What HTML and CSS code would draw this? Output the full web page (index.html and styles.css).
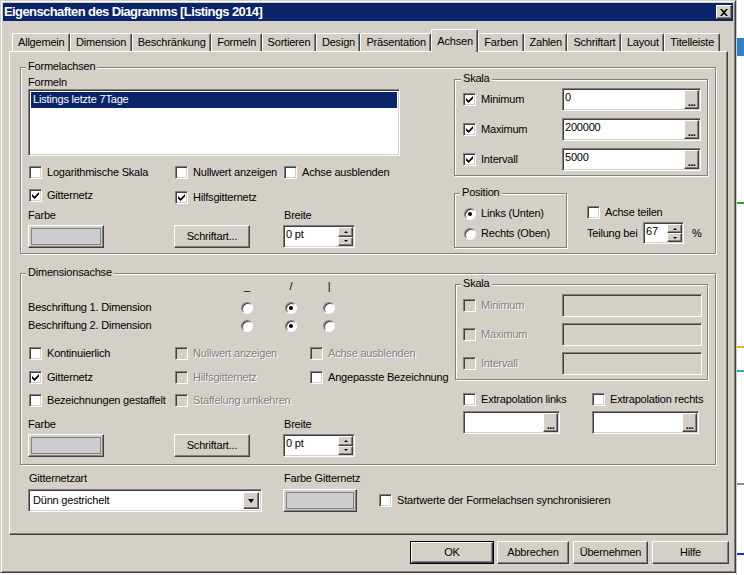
FILE: index.html
```html
<!DOCTYPE html>
<html lang="de">
<head>
<meta charset="utf-8">
<title>Eigenschaften des Diagramms</title>
<link rel="stylesheet" href="styles.css">
</head>
<body>
<div class="screen">
  <div class="dialog">
    <div class="titlebar">
      <span class="title">Eigenschaften des Diagramms [Listings 2014]</span>
      <span class="close raised"><svg viewBox="0 0 8 7" class="xicon"><path d="M0 0h2l2 2.2L6 0h2L5 3.5 8 7H6L4 4.8 2 7H0l3-3.5z"/></svg></span>
    </div>
    <div class="tabs">
      <span class="tab">Allgemein</span>
      <span class="tab">Dimension</span>
      <span class="tab">Beschränkung</span>
      <span class="tab">Formeln</span>
      <span class="tab">Sortieren</span>
      <span class="tab">Design</span>
      <span class="tab">Präsentation</span>
      <span class="tab active">Achsen</span>
      <span class="tab">Farben</span>
      <span class="tab">Zahlen</span>
      <span class="tab">Schriftart</span>
      <span class="tab">Layout</span>
      <span class="tab">Titelleiste</span>
    </div>
    <div class="panel">
      <div class="group g-formel">
        <span class="glabel gl-main">Formelachsen</span>
        <div class="fl-left">
          <div class="lbl">Formeln</div>
          <div class="listbox sunken"><div class="sel">Listings letzte 7Tage</div></div>
          <div class="crow fr1">
            <span class="chk c1"><span class="box sunken"></span>Logarithmische Skala</span>
            <span class="chk c2f"><span class="box sunken"></span>Nullwert anzeigen</span>
            <span class="chk"><span class="box sunken"></span>Achse ausblenden</span>
          </div>
          <div class="crow fr2">
            <span class="chk c1"><span class="box sunken"><svg class="tick" viewBox="0 0 7 7"><path d="M0 2L2.5 4.5L7 0V2.5L2.5 7L0 4.5Z"/></svg></span>Gitternetz</span>
            <span class="chk c2f low"><span class="box sunken"><svg class="tick" viewBox="0 0 7 7"><path d="M0 2L2.5 4.5L7 0V2.5L2.5 7L0 4.5Z"/></svg></span>Hilfsgitternetz</span>
          </div>
          <div class="lrow"><span class="lw">Farbe</span><span>Breite</span></div>
          <div class="ctrlrow">
            <span class="colorbtn raised"><span class="swatch"></span></span>
            <span class="btn raised fontbtn">Schriftart...</span>
            <span class="spin sunken"><span class="spin-val">0 pt</span><span class="spin-btns"><span class="sb raised up"></span><span class="sb raised down"></span></span></span>
          </div>
        </div>
        <div class="fl-right">
          <div class="group skala">
            <span class="glabel gl-sub">Skala</span>
            <div class="srow">
              <span class="chk sc"><span class="box sunken"><svg class="tick" viewBox="0 0 7 7"><path d="M0 2L2.5 4.5L7 0V2.5L2.5 7L0 4.5Z"/></svg></span>Minimum</span>
              <span class="field sunken"><span class="fv">0</span><span class="dots raised">...</span></span>
            </div>
            <div class="srow">
              <span class="chk sc"><span class="box sunken"><svg class="tick" viewBox="0 0 7 7"><path d="M0 2L2.5 4.5L7 0V2.5L2.5 7L0 4.5Z"/></svg></span>Maximum</span>
              <span class="field sunken"><span class="fv">200000</span><span class="dots raised">...</span></span>
            </div>
            <div class="srow">
              <span class="chk sc"><span class="box sunken"><svg class="tick" viewBox="0 0 7 7"><path d="M0 2L2.5 4.5L7 0V2.5L2.5 7L0 4.5Z"/></svg></span>Intervall</span>
              <span class="field sunken"><span class="fv">5000</span><span class="dots raised">...</span></span>
            </div>
          </div>
          <div class="posrow">
            <div class="group pos">
              <span class="glabel gl-pos">Position</span>
              <span class="rad"><span class="radio on"></span>Links (Unten)</span>
              <span class="rad"><span class="radio"></span>Rechts (Oben)</span>
            </div>
            <div class="split">
              <span class="chk"><span class="box sunken"></span>Achse teilen</span>
              <div class="teil">
                <span class="teil-l">Teilung bei</span>
                <span class="spin small sunken"><span class="spin-val">67</span><span class="spin-btns"><span class="sb raised up"></span><span class="sb raised down"></span></span></span>
                <span class="pct">%</span>
              </div>
            </div>
          </div>
        </div>
      </div>

      <div class="group g-dim">
        <span class="glabel gl-main">Dimensionsachse</span>
        <div class="dl-left">
          <div class="hdr"><span class="hc">_</span><span class="hc h2">/</span><span class="hc h3">|</span></div>
          <div class="rrow r1"><span class="rl">Beschriftung 1. Dimension</span><span class="radio"></span><span class="radio on h2"></span><span class="radio h3"></span></div>
          <div class="rrow r2"><span class="rl">Beschriftung 2. Dimension</span><span class="radio"></span><span class="radio on h2"></span><span class="radio h3"></span></div>
          <div class="crow dr1">
            <span class="chk c1"><span class="box sunken"></span>Kontinuierlich</span>
            <span class="chk c2d dis"><span class="box sunken dbox"></span>Nullwert anzeigen</span>
            <span class="chk dis"><span class="box sunken dbox"></span>Achse ausblenden</span>
          </div>
          <div class="crow dr2">
            <span class="chk c1"><span class="box sunken"><svg class="tick" viewBox="0 0 7 7"><path d="M0 2L2.5 4.5L7 0V2.5L2.5 7L0 4.5Z"/></svg></span>Gitternetz</span>
            <span class="chk c2d dis"><span class="box sunken dbox"></span>Hilfsgitternetz</span>
            <span class="chk"><span class="box sunken"></span>Angepasste Bezeichnung</span>
          </div>
          <div class="crow dr3">
            <span class="chk c1"><span class="box sunken"></span>Bezeichnungen gestaffelt</span>
            <span class="chk dis"><span class="box sunken dbox"></span>Staffelung umkehren</span>
          </div>
          <div class="lrow dl"><span class="lw">Farbe</span><span>Breite</span></div>
          <div class="ctrlrow">
            <span class="colorbtn raised"><span class="swatch"></span></span>
            <span class="btn raised fontbtn">Schriftart...</span>
            <span class="spin sunken"><span class="spin-val">0 pt</span><span class="spin-btns"><span class="sb raised up"></span><span class="sb raised down"></span></span></span>
          </div>
        </div>
        <div class="dl-right">
          <div class="group dskala">
            <span class="glabel gl-pos">Skala</span>
            <div class="srow">
              <span class="chk sc dis"><span class="box sunken dbox"></span>Minimum</span>
              <span class="field dfield sunken"></span>
            </div>
            <div class="srow">
              <span class="chk sc dis"><span class="box sunken dbox"></span>Maximum</span>
              <span class="field dfield sunken"></span>
            </div>
            <div class="srow">
              <span class="chk sc dis"><span class="box sunken dbox"></span>Intervall</span>
              <span class="field dfield sunken"></span>
            </div>
          </div>
          <div class="xrow">
            <span class="chk xc"><span class="box sunken"></span>Extrapolation links</span>
            <span class="chk"><span class="box sunken"></span>Extrapolation rechts</span>
          </div>
          <div class="xfields">
            <span class="field xf1 sunken"><span class="fv"></span><span class="dots raised">...</span></span>
            <span class="field xf2 sunken"><span class="fv"></span><span class="dots raised">...</span></span>
          </div>
        </div>
      </div>

      <div class="bottom">
        <div class="bcol1">
          <div class="blbl">Gitternetzart</div>
          <div class="combo sunken"><span class="combo-val">Dünn gestrichelt</span><span class="combo-btn raised"></span></div>
        </div>
        <div class="bcol2">
          <div class="blbl">Farbe Gitternetz</div>
          <span class="colorbtn raised cb2"><span class="swatch"></span></span>
        </div>
        <div class="bcol3">
          <span class="chk"><span class="box sunken"></span>Startwerte der Formelachsen synchronisieren</span>
        </div>
      </div>
    </div>
    <div class="buttons">
      <span class="okwrap"><span class="btn raised bok">OK</span></span>
      <span class="btn raised b2">Abbrechen</span>
      <span class="btn raised b3">Übernehmen</span>
      <span class="btn raised b4">Hilfe</span>
    </div>
  </div>
  <div class="behind"></div>
</div>
</body>
</html>
```
FILE: styles.css
```css
* { box-sizing: border-box; }
html, body { margin: 0; padding: 0; }
body {
  width: 744px; height: 575px; overflow: hidden;
  background: #fff; color: #000;
  font: 11px/13px "Liberation Sans", Arial, "DejaVu Sans", sans-serif;
  letter-spacing: -0.2px;
}
.screen { display: flex; height: 575px; }

.raised {
  border: 1px solid; border-color: #fff #404040 #404040 #fff;
  box-shadow: inset -1px -1px #808080;
  background: #d4d0c8;
}
.sunken {
  border: 1px solid; border-color: #808080 #fff #fff #808080;
  box-shadow: inset 1px 1px #404040, inset -1px -1px #d4d0c8;
}

.dialog {
  width: 736px; height: 573px; flex: none;
  background: #d4d0c8;
  border: 1px solid; border-color: #d4d0c8 #404040 #404040 #d4d0c8;
  box-shadow: inset 1px 1px #fff, inset -1px -1px #808080;
  padding: 2px 2px 0 2px;
  display: flex; flex-direction: column;
}
.titlebar {
  height: 18px; background: #0a246a; color: #fff;
  display: flex; align-items: center; justify-content: space-between;
  padding: 0 1px 0 1px;
}
.title { font-weight: bold; font-size: 13px; letter-spacing: -0.6px; line-height: 16px; }
.close { width: 16px; height: 14px; display: flex; align-items: center; justify-content: center; }
.xicon { width: 8px; height: 7px; fill: #000; display: block; }

.tabs { display: flex; align-items: flex-end; height: 22px; margin: 8px 0 0 9px; position: relative; z-index: 1; }
.tab {
  height: 18px; padding: 2px 4.5px 0 5px; white-space: nowrap;
  border-top: 1px solid #fff; border-left: 1px solid #fff; border-right: 1px solid #404040;
  box-shadow: inset -1px 0 #808080;
  border-radius: 2px 2px 0 0;
  background: #d4d0c8;
}
.tab.active { height: 23px; margin-bottom: -1px; padding-top: 5px; }

.panel {
  width: 719px; height: 484px; margin-left: 6px;
  border: 1px solid; border-color: #fff #404040 #404040 #fff;
  box-shadow: inset -1px -1px #808080;
  padding: 15px 0 0 10px;
  display: flex; flex-direction: column;
}

.group {
  position: relative;
  border: 1px solid #808080;
  box-shadow: inset 1px 1px #fff, 1px 1px #fff;
}
.glabel { position: absolute; top: -8px; background: #d4d0c8; padding: 0 2px; white-space: nowrap; }
.gl-main { left: 5px; }
.gl-sub { left: 6px; }
.gl-pos { left: 5px; }

/* Formelachsen */
.g-formel { width: 696px; height: 187px; flex: none; display: flex; padding-left: 7px; }
.fl-left { width: 372px; padding-top: 8px; }
.fl-right { width: 254px; margin-left: 54px; padding-top: 11px; }
.lbl { height: 13px; }
.listbox { width: 372px; height: 67px; background: #fff; padding: 2px; }
.sel { height: 16px; background: #0a246a; color: #fff; padding-left: 2px; line-height: 15px; }

.crow { display: flex; align-items: flex-start; padding-left: 1px; }
.fr1 { margin-top: 10px; }
.fr2 { margin-top: 10px; }
.low { margin-top: 2px; }
.c1 { width: 146px; }
.c2f { width: 109px; }
.c2d { width: 135px; }

.chk { display: flex; align-items: center; gap: 5px; height: 13px; white-space: nowrap; }
.box {
  width: 13px; height: 13px; flex: none; background: #fff;
  display: flex; align-items: center; justify-content: center;
}
.dbox { background: #d4d0c8; }
.tick { width: 7px; height: 7px; display: block; fill: #000; }
.dis { color: #808080; text-shadow: 1px 1px #fff; }

.lrow { display: flex; margin-top: 5px; height: 13px; }
.lw { width: 256px; }
.ctrlrow { display: flex; margin-top: 3px; height: 23px; }
.colorbtn { width: 76px; height: 23px; padding: 2px; display: flex; }
.swatch { flex: 1; background: #cdcdd0; border: 1px solid #808080; }
.btn { display: flex; align-items: center; justify-content: center; height: 23px; white-space: nowrap; }
.fontbtn { width: 76px; margin-left: 70px; }
.spin { width: 72px; height: 23px; margin-left: 33px; padding: 1px; display: flex; background: #fff; }
.spin-val { flex: 1; padding-left: 1px; line-height: 15px; background: #fff; }
.spin-btns { width: 15px; display: flex; flex-direction: column; }
.sb { flex: 1; display: flex; align-items: center; justify-content: center; }
.sb.up::after { content: ""; border: solid transparent; border-width: 0 2px 2px; border-bottom-color: #000; }
.sb.down::after { content: ""; border: solid transparent; border-width: 2px 2px 0; border-top-color: #000; }
.spin.small { width: 41px; height: 22px; margin-left: 0; }

.skala { width: 254px; height: 97px; padding: 8px 0 0 8px; display: flex; flex-direction: column; gap: 7px; }
.srow { display: flex; align-items: center; height: 23px; }
.sc { width: 99px; }
.field { width: 139px; height: 23px; padding: 1px; display: flex; background: #fff; }
.fv { flex: 1; padding-left: 1px; line-height: 15px; }
.dots {
  width: 15px; display: flex; align-items: flex-end; justify-content: center;
  line-height: 10px; font-weight: bold; letter-spacing: -0.5px; padding-bottom: 1px;
}
.dfield { background: #d4d0c8; width: 140px; }

.posrow { display: flex; margin-top: 17px; }
.pos { width: 113px; height: 55px; padding: 13px 0 0 9px; display: flex; flex-direction: column; gap: 7px; }
.rad { display: flex; align-items: center; gap: 5px; height: 13px; white-space: nowrap; }
.radio {
  width: 12px; height: 12px; flex: none; border-radius: 50%; background: #fff;
  border: 1px solid; border-color: #808080 #fff #fff #808080;
  box-shadow: inset 1px 1px #404040;
  display: flex; align-items: center; justify-content: center;
}
.radio.on::after { content: ""; width: 4px; height: 4px; border-radius: 50%; background: #000; }
.split { margin-left: 19px; padding: 13px 0 0 1px; }
.teil { display: flex; align-items: center; height: 22px; margin-top: 3px; }
.teil-l { width: 56px; }
.pct { margin-left: 8px; }

/* Dimensionsachse */
.g-dim { width: 696px; height: 192px; flex: none; margin-top: 19px; display: flex; padding-left: 7px; }
.dl-left { width: 427px; padding-top: 6px; }
.hdr { display: flex; height: 13px; padding-left: 213px; }
.hc { width: 12px; text-align: center; }
.h2 { margin-left: 32px; }
.h3 { margin-left: 26px; }
.rrow { display: flex; align-items: center; height: 13px; }
.rrow.r1 { margin-top: 8px; }
.rrow.r2 { margin-top: 5px; }
.rl { width: 213px; }
.dr1 { margin-top: 15px; }
.dr2 { margin-top: 11px; }
.dr3 { margin-top: 10px; }
.lrow.dl { margin-top: 11px; }

.dl-right { width: 253px; padding-top: 10px; }
.dskala { width: 253px; height: 96px; padding: 9px 0 0 7px; display: flex; flex-direction: column; gap: 6px; }
.xrow { display: flex; margin-top: 13px; padding-left: 8px; }
.xc { width: 129px; }
.xfields { display: flex; margin-top: 5px; padding-left: 8px; }
.xf1 { width: 97px; }
.xf2 { width: 107px; margin-left: 32px; }

/* bottom */
.bottom { display: flex; margin-top: 7px; padding-left: 8px; }
.blbl { height: 13px; padding-left: 1px; white-space: nowrap; }
.bcol1 { width: 234px; }
.combo { width: 234px; height: 23px; margin-top: 4px; padding: 2px; display: flex; background: #fff; }
.combo-val { flex: 1; padding-left: 2px; line-height: 17px; }
.combo-btn { width: 16px; display: flex; align-items: center; justify-content: center; }
.combo-btn::after { content: ""; border: solid transparent; border-width: 4px 3.5px 0; border-top-color: #000; }
.bcol2 { width: 74px; margin-left: 21px; }
.cb2 { width: 74px; margin-top: 4px; }
.bcol3 { margin-left: 22px; padding-top: 22px; }

.buttons { display: flex; margin-top: 6px; padding-left: 407px; height: 23px; }
.okwrap { width: 84px; height: 23px; border: 1px solid #000; display: flex; }
.bok { flex: 1; height: 21px; }
.b2 { width: 72px; margin-left: 3px; }
.b3 { width: 75px; margin-left: 4px; }
.b4 { width: 77px; margin-left: 4px; }

.behind {
  flex: 1; height: 575px;
  border-left: 1px solid #c8c8c8;
  background:
    linear-gradient(to bottom,
      transparent 0 38px, #2a82c8 38px 56px,
      transparent 56px 202px, #3a9a3a 202px 204px,
      transparent 204px 346px, #e0b830 346px 348px,
      transparent 348px 370px, #30a8b8 370px 372px,
      transparent 372px 483px, #909090 483px 485px,
      transparent 485px 553px, #2030c8 553px 555px,
      transparent 555px),
    #fff;
}
```
